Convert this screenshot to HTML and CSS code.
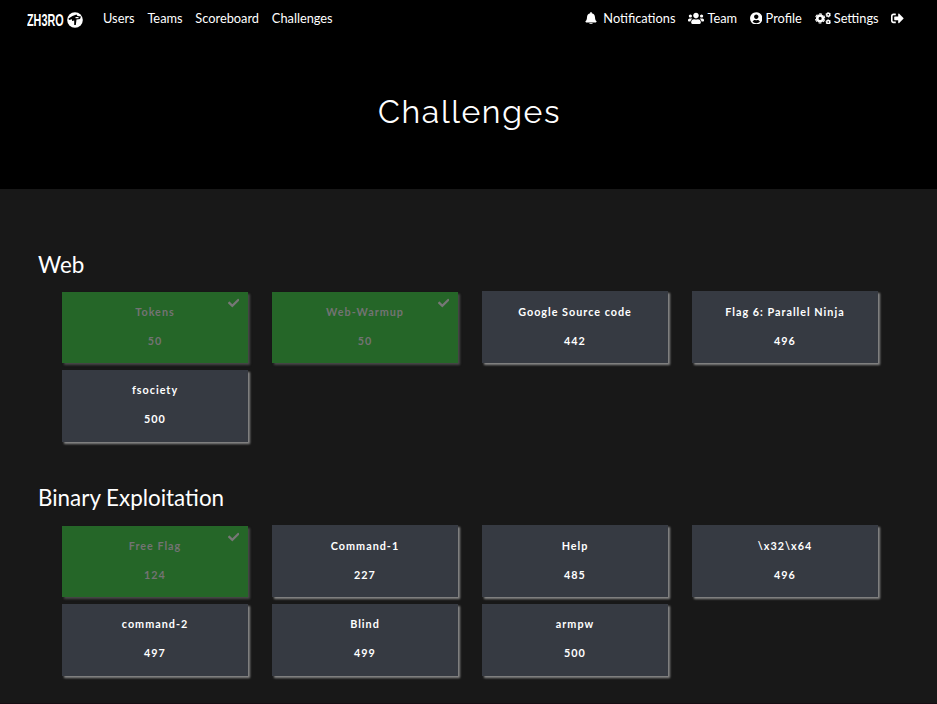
FILE: index.html
```html
<!DOCTYPE html>
<html lang="en">
<head>
<meta charset="utf-8">
<title>ZH3RO CTF</title>
<link rel="stylesheet" href="styles.css">
</head>
<body>
<nav class="navbar">
  <a class="brand"><span class="brand-name">ZH3RO</span><svg class="brand-mark" viewBox="0 0 16 16"><circle cx="8" cy="8" r="7.8" fill="#fff"/><path d="M1.500 6.500 5.500 4l4-1.500 1 1.500 3.500.5-1 2.500-3.500.5-.7 5.500H7.200V8.500L5 9V7.300L2 8z" fill="#000"/><path d="M8.500 5h3v1.200h-3z" fill="#fff"/></svg></a>
  <div class="links"><a>Users</a><a>Teams</a><a>Scoreboard</a><a>Challenges</a></div>
  <div class="links account">
    <a class="notifications"><svg class="icon bell" viewBox="0 0 448 512"><path d="M224 512c35.320 0 63.970-28.650 63.970-64H160.030c0 35.350 28.650 64 63.970 64zm215.390-149.710c-19.320-20.760-55.470-51.990-55.470-154.290 0-77.700-54.480-139.900-127.940-155.160V32c0-17.670-14.320-32-31.980-32s-31.980 14.330-31.980 32v20.840C118.560 68.100 64.080 130.300 64.080 208c0 102.300-36.150 133.530-55.470 154.290-6 6.450-8.660 14.160-8.610 21.710.11 16.400 12.980 32 32.100 32h383.800c19.120 0 32-15.600 32.100-32 .05-7.550-2.610-15.270-8.610-21.710z"/></svg>Notifications</a>
    <a><svg class="icon wide" viewBox="0 0 640 512"><path d="M96 224c35.300 0 64-28.700 64-64s-28.700-64-64-64-64 28.700-64 64 28.700 64 64 64zm448 0c35.300 0 64-28.700 64-64s-28.700-64-64-64-64 28.700-64 64 28.700 64 64 64zm32 32h-64c-17.600 0-33.500 7.100-45.100 18.600 40.300 22.100 68.900 62 75.100 109.400h66c17.700 0 32-14.300 32-32v-32c0-35.300-28.700-64-64-64zm-256 0c61.900 0 112-50.100 112-112S381.900 32 320 32 208 82.100 208 144s50.100 112 112 112zm76.800 32h-8.300c-20.800 10-43.900 16-68.500 16s-47.600-6-68.500-16h-8.300C179.600 288 128 339.600 128 403.200V432c0 26.500 21.500 48 48 48h288c26.500 0 48-21.500 48-48v-28.800c0-63.600-51.600-115.200-115.200-115.200zm-223.700-13.400C161.500 263.100 145.600 256 128 256H64c-35.300 0-64 28.700-64 64v32c0 17.700 14.300 32 32 32h65.900c6.300-47.400 34.900-87.300 75.200-109.400z"/></svg>Team</a>
    <a><svg class="icon circle" viewBox="0 0 496 512"><path d="M248 8C111 8 0 119 0 256s111 248 248 248 248-111 248-248S385 8 248 8zm0 96c48.600 0 88 39.400 88 88s-39.400 88-88 88-88-39.400-88-88 39.400-88 88-88zm0 344c-58.700 0-111.300-26.600-146.500-68.200 18.800-35.400 55.600-59.800 98.500-59.800 2.400 0 4.800.4 7.100 1.100 13 4.200 26.600 6.900 40.900 6.900s28-2.700 40.900-6.900c2.300-.7 4.700-1.100 7.100-1.100 42.900 0 79.700 24.400 98.500 59.800C359.300 421.400 306.700 448 248 448z"/></svg>Profile</a>
    <a><svg class="icon wide" viewBox="0 0 640 512"><g fill="none" stroke="#fff"><circle cx="205" cy="256" r="115" stroke-width="105"/><circle cx="205" cy="256" r="184" stroke-width="44" stroke-dasharray="113 79.680" stroke-dashoffset="-40"/><circle cx="530" cy="110" r="62" stroke-width="58"/><circle cx="530" cy="110" r="98" stroke-width="24" stroke-dasharray="62 40.600"/><circle cx="530" cy="402" r="62" stroke-width="58"/><circle cx="530" cy="402" r="98" stroke-width="24" stroke-dasharray="62 40.600"/></g></svg>Settings</a>
    <a><svg class="icon signout" viewBox="0 0 512 512"><path d="M497 273L329 441c-15 15-41 4.500-41-17v-96H152c-13.300 0-24-10.700-24-24v-96c0-13.300 10.700-24 24-24h136V88c0-21.400 25.900-32 41-17l168 168c9.300 9.400 9.300 24.600 0 34zM192 436v-40c0-6.600-5.400-12-12-12H96c-17.700 0-32-14.300-32-32V160c0-17.700 14.300-32 32-32h84c6.600 0 12-5.400 12-12V76c0-6.600-5.400-12-12-12H96c-53 0-96 43-96 96v192c0 53 43 96 96 96h84c6.600 0 12-5.400 12-12z"/></svg></a>
  </div>
</nav>
<header class="hero"><h1>Challenges</h1></header>
<main>
  <section class="category">
    <h3>Web</h3>
    <div class="grid">
      <div class="card solved"><p>Tokens</p><span>50</span><svg class="check" viewBox="0 0 512 512"><path d="M173.900 439.400l-166.400-166.400c-10-10-10-26.200 0-36.200l36.200-36.200c10-10 26.200-10 36.200 0L192 312.700 432.100 72.600c10-10 26.200-10 36.200 0l36.200 36.200c10 10 10 26.200 0 36.200L210.100 439.400c-10 10-26.200 10-36.200 0z"/></svg></div>
      <div class="card solved"><p>Web-Warmup</p><span>50</span><svg class="check" viewBox="0 0 512 512"><path d="M173.900 439.400l-166.400-166.400c-10-10-10-26.200 0-36.200l36.200-36.200c10-10 26.200-10 36.200 0L192 312.700 432.100 72.600c10-10 26.200-10 36.200 0l36.200 36.200c10 10 10 26.200 0 36.200L210.100 439.400c-10 10-26.200 10-36.200 0z"/></svg></div>
      <div class="card"><p>Google Source code</p><span>442</span></div>
      <div class="card"><p>Flag 6: Parallel Ninja</p><span>496</span></div>
      <div class="card"><p>fsociety</p><span>500</span></div>
    </div>
  </section>
  <section class="category">
    <h3>Binary Exploitation</h3>
    <div class="grid">
      <div class="card solved"><p>Free Flag</p><span>124</span><svg class="check" viewBox="0 0 512 512"><path d="M173.900 439.400l-166.400-166.400c-10-10-10-26.200 0-36.200l36.200-36.200c10-10 26.200-10 36.200 0L192 312.700 432.100 72.600c10-10 26.200-10 36.200 0l36.200 36.200c10 10 10 26.200 0 36.200L210.100 439.400c-10 10-26.200 10-36.200 0z"/></svg></div>
      <div class="card"><p>Command-1</p><span>227</span></div>
      <div class="card"><p>Help</p><span>485</span></div>
      <div class="card"><p>\x32\x64</p><span>496</span></div>
      <div class="card"><p>command-2</p><span>497</span></div>
      <div class="card"><p>Blind</p><span>499</span></div>
      <div class="card"><p>armpw</p><span>500</span></div>
    </div>
  </section>
</main>
</body>
</html>
```
FILE: styles.css
```css
* { box-sizing: border-box; }
body {
  margin: 0;
  height: 704px;
  overflow: hidden;
  background: #181818;
  border-bottom: 1px solid #160d12;
  color: #fff;
  font: 12.8px/20px Lato, sans-serif;
}
.navbar {
  display: flex;
  align-items: center;
  height: 37px;
  padding: 0 32.8px 1px 27px;
  background: #000;
}
.brand { display: flex; align-items: center; width: 76px; padding-top: 3px; }
.brand-name {
  width: 39.5px;
  font: bold 16.5px/16px "Liberation Sans", sans-serif;
  transform: scaleX(.655);
  transform-origin: left;
  white-space: nowrap;
}
.brand-mark { width: 16px; height: 16px; flex: none; }
.links { display: flex; gap: 12.8px; }
.account { margin-left: auto; }
.links a { display: flex; align-items: center; gap: 3.2px; }
.links .notifications { gap: 6px; }
.icon { height: 12.8px; fill: #fff; flex: none; }
.bell { width: 12px; }
.wide { width: 16px; }
.circle { width: 12.5px; }
.signout { width: 12.8px; }
.hero { height: 152px; padding-top: 51px; background: #000; text-align: center; }
.hero h1 {
  margin: 0;
  padding-left: 2px;
  font: 400 32px/48px Raleway, Lato, sans-serif;
  letter-spacing: 1.6px;
}
main { padding: 60px 38px 0; }
.category { height: 234px; }
.category + .category h3 { margin: -1px 0 12px; }
.category h3 { margin: 0 0 11px; font-size: 22.4px; line-height: 31px; font-weight: 400; }
.grid {
  display: grid;
  grid-template-columns: repeat(4, 186px);
  grid-auto-rows: 72px;
  gap: 7px 24px;
  padding-left: 24px;
}
.card {
  position: relative;
  height: 72px;
  padding-top: 11px;
  background: #363a42;
  box-shadow: 2.4px 2.4px 2px #888;
  text-align: center;
  font-size: 10.8px;
  line-height: 20px;
  font-weight: 700;
  letter-spacing: 1px;
}
.card:nth-child(n+5) { padding-top: 10px; }
.card p { margin: 0 0 9px; }
.card span { display: block; }
.card.solved { background: #256628; color: #737373; box-shadow: 2.4px 2.4px 2px #484848; height: 71px; margin-top: 1px; padding-top: 10px; }
.check { position: absolute; top: 5px; right: 9px; width: 11.5px; height: 12px; fill: #777; }
```
